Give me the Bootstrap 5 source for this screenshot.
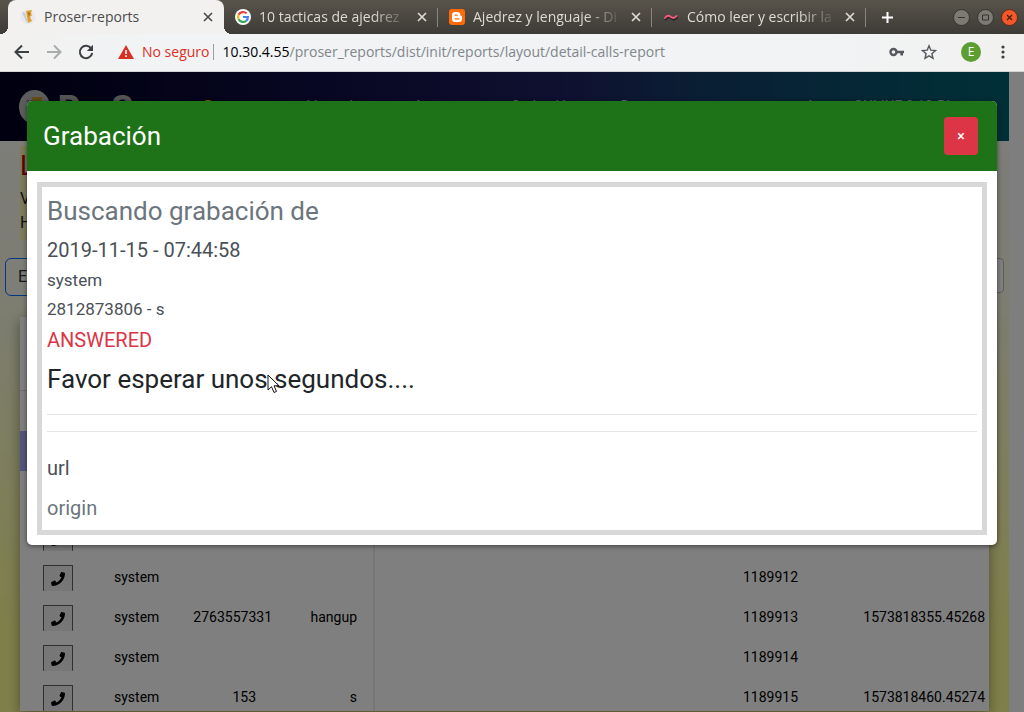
<!DOCTYPE html>
<html lang="es">
<head>
<meta charset="utf-8">
<meta name="viewport" content="width=device-width, initial-scale=1">
<title>Proser-reports</title>
<link href="https://cdn.jsdelivr.net/npm/bootstrap@5.3.0/dist/css/bootstrap.min.css" rel="stylesheet">
<style>
  body { font-family: Roboto, "Liberation Sans", sans-serif; color: #212529; }
  svg { display: block; flex: none; }

  /* browser window */
  .chrome-ui { font-family: "Open Sans", "Noto Sans", sans-serif; font-size: 14px; line-height: 20px; }
  .tab-strip { height: 34px; background: linear-gradient(#59544b, #3d3b37); color: #dfdbd2; padding-left: 8px; }
  .browser-tab { flex: 0 1 214px; min-width: 0; padding: 0 10px 0 11px; gap: 8px; position: relative; }
  .browser-tab + .browser-tab:not(.after-active)::before,
  .new-tab::before { content: ""; position: absolute; left: -1px; top: 8px; width: 1px; height: 19px; background: #8a867d; }
  .browser-tab.current { flex-basis: 216px; padding-left: 12px; background: #f2f1f0; color: #4c4c4c; border-radius: 8px 8px 0 0; }
  .browser-tab.current::before, .browser-tab.current::after { content: ""; position: absolute; bottom: 0; width: 8px; height: 8px; }
  .browser-tab.current::before { left: -8px; background: radial-gradient(circle at 0 0, transparent 8px, #f2f1f0 8px); }
  .browser-tab.current::after { right: -8px; background: radial-gradient(circle at 100% 0, transparent 8px, #f2f1f0 8px); }
  .tab-title { flex: 1 1 0; min-width: 0; overflow: hidden; white-space: nowrap; }
  .fading { -webkit-mask-image: linear-gradient(to left, transparent, #000 36px); mask-image: linear-gradient(to left, transparent, #000 36px); }
  .plain { background: none; border: 0; padding: 0; color: inherit; }
  .new-tab { position: relative; padding: 0 15px; }
  .win-controls { gap: 7px; padding-right: 6px; }
  .toolbar { height: 38px; background: linear-gradient(90deg, #f2f1f0, #f1f3f4 15%, #f1f3f4 80%, #f2f1f0); border-bottom: 1px solid #d4d4d2; color: #4a4a4a; padding: 0 17px 1px 13px; }
  .address { color: #80868b; white-space: nowrap; }
  .unsafe { color: #d93025; }
  .addr-divider { width: 1px; height: 16px; background: #9aa0a6; }
  .profile { width: 20px; height: 20px; border-radius: 50%; background: #5c9e31; color: #fff; font-size: 12px; line-height: 20px; }

  /* page behind the dialog */
  .web-view { position: relative; min-height: 0; background: #fff; }
  .scroll-gutter { width: 15px; background: #fcfcfc; }
  .report-page { min-width: 0; background: linear-gradient(#fbfbf2 12%, #fafae4 35%, #ffff94 88%); }
  .site-nav { height: 69px; padding: 0 57px 0 19px; background: linear-gradient(90deg, #000020, #100f46 32%, #1f2060 55%, #143e68 70%, #00606f); color: #c8c8c8; font-size: 14px; }
  .site-nav a { color: inherit; text-decoration: none; }
  .site-nav .brand-text { font-size: 34px; font-weight: 900; color: #aaa; line-height: 34px; }
  .nav-links { gap: 46px; padding-left: 40px; }
  .report-head { margin: 5px 5px 0 20px; line-height: 24px; }
  .report-head > div { display: inline-block; background: #f8f8b8; padding: 5px 0; vertical-align: top; }
  .report-head h1 { font-size: 27px; line-height: 30px; font-weight: 400; color: #c00000; margin: 0 0 6px; }
  .report-tools { padding: 18px 5px 0; }
  .report-tools .btn { height: 38px; background: #fcfcf2; color: #333; padding: 0 12px; }
  .report-tools input { width: 240px; height: 35px; border: 1px solid #bbb; border-radius: 4px; background: #fff; }
  .report-card { margin: 21px 20px 0; background: #fff; box-shadow: 0 3px 12px rgba(0, 0, 0, .4); }
  .filter-bar { height: 74px; border-bottom: 1px solid #ddd; }
  .calls { width: 100%; table-layout: fixed; font-size: 14px; line-height: 28px; color: #000; }
  .calls th, .calls td { height: 40px; padding: 0; vertical-align: top; font-weight: 400; white-space: nowrap; }
  .calls td { padding-top: 12px; }
  .calls .totals { background: #a9abff; }
  .calls .edge { border-right: 2px solid #ececec; padding-right: 16px; }
  .calls .short { padding-right: 16px; }
  .calls td.action { padding: 14px 0 0 23px; }
  .play-btn { width: 30px; height: 26px; padding: 0 0 0 7px; border: 1px solid #606060; border-bottom: 0; border-radius: 1px; background: #efefef; display: block; color: #000; }

  /* dialog */
  .shade { position: absolute; inset: 0; background: rgba(0, 0, 0, .5); padding: 29px 27px; }
  .shade .modal-content { border: 0; border-radius: 5px; background: #fff; color: #212529; box-shadow: 0 1px 5px rgba(0, 0, 0, .5); }
  .shade .modal-header { height: 70px; padding: 0 19px 0 16px; border: 0; border-radius: 5px 5px 0 0; background: #1e7217; color: #fff; }
  .shade .modal-body { margin: 11px 10px 10px; border: 5px solid #d8d8d8; padding: 9px 5px 10px; }
  .title-lg { font-size: 26px; line-height: 30px; font-weight: 400; margin: 0; }
  .text-md { font-size: 20px; line-height: 24px; margin: 0; }
  .text-sm { font-size: 17px; line-height: 21px; margin: 0; }
  .gap-under { margin-bottom: 12px; }
  .gap-rule { margin-bottom: 20px; }
  .ink { color: #495057; }
  .soft { color: #6c757d; }
  .btn-close-red { width: 34px; height: 38px; padding: 0; border-radius: 4px; background: #dc3545; color: #fff; font-size: 14px; font-weight: 500; border: 0; }
  .shade hr { margin: 0; color: #000; opacity: .1; }
  .pointer { position: absolute; left: 267px; top: 302px; }
</style>
</head>
<body class="d-flex flex-column vh-100 overflow-hidden">

<header class="chrome-ui flex-shrink-0">
  <div class="tab-strip d-flex align-items-stretch">
    <div class="browser-tab current d-flex align-items-center">
      <svg width="16" height="16" viewBox="0 0 16 16"><circle cx="8" cy="8" r="7.500" fill="#e8e9ee"/><path d="M2 3l4 9 2 2-3-10z" fill="#c6c9d4"/><path d="M6 2l6-1-1 3 1 2-2 2 2 4-4 2-1-6z" fill="#e2a02c"/><path d="M8 3l2 1-1 4z" fill="#8d651c"/></svg>
      <span class="tab-title">Proser-reports</span>
      <button class="plain" aria-label="Cerrar pestaña"><svg width="12" height="12" viewBox="0 0 12 12" stroke="currentColor" stroke-width="1.700"><path d="M2 2l8 8M10 2l-8 8"/></svg></button>
    </div>
    <div class="browser-tab after-active d-flex align-items-center">
      <svg width="16" height="16" viewBox="0 0 16 16"><circle cx="8" cy="8" r="8" fill="#fff"/><g fill="none" stroke-width="2.200"><path d="M11.500 4.400A5 5 0 0 0 3.600 5.700" stroke="#ea4335"/><path d="M3.600 5.700a5 5 0 0 0 0 4.600" stroke="#fbbc05"/><path d="M3.600 10.300a5 5 0 0 0 7.600 1.500" stroke="#34a853"/><path d="M11.200 11.800A5 5 0 0 0 12.900 8H8" stroke="#4285f4"/></g></svg>
      <span class="tab-title fading">10 tacticas de ajedrez</span>
      <button class="plain" aria-label="Cerrar pestaña"><svg width="12" height="12" viewBox="0 0 12 12" stroke="currentColor" stroke-width="1.700"><path d="M2 2l8 8M10 2l-8 8"/></svg></button>
    </div>
    <div class="browser-tab d-flex align-items-center">
      <svg width="16" height="16" viewBox="0 0 16 16"><rect width="16" height="16" rx="3" fill="#ff6a0a"/><path d="M6 3h2.500A2.800 2.800 0 0 1 11.300 5.800c0 .8.300 1 1 1 .5 0 .7.300.7.700V10a3 3 0 0 1-3 3H6a3 3 0 0 1-3-3V6a3 3 0 0 1 3-3z" fill="#fff"/><path d="M6.200 6.100h2M6.200 9.900h3.600" stroke="#ff6a0a" stroke-width="1.400" stroke-linecap="round"/></svg>
      <span class="tab-title fading">Ajedrez y lenguaje - Di</span>
      <button class="plain" aria-label="Cerrar pestaña"><svg width="12" height="12" viewBox="0 0 12 12" stroke="currentColor" stroke-width="1.700"><path d="M2 2l8 8M10 2l-8 8"/></svg></button>
    </div>
    <div class="browser-tab d-flex align-items-center">
      <svg width="16" height="16" viewBox="0 0 16 16" fill="none" stroke-linecap="round"><path d="M2.500 10.500c2-3 4-2.500 6-1s4 1 5.500-1" stroke="#222" stroke-width="2"/><path d="M2 9c2-3 4-2.500 6-1s4 1 5.500-1" stroke="#f05a78" stroke-width="2"/></svg>
      <span class="tab-title fading">Cómo leer y escribir la</span>
      <button class="plain" aria-label="Cerrar pestaña"><svg width="12" height="12" viewBox="0 0 12 12" stroke="currentColor" stroke-width="1.700"><path d="M2 2l8 8M10 2l-8 8"/></svg></button>
    </div>
    <button class="plain new-tab" aria-label="Nueva pestaña"><svg width="13" height="13" viewBox="0 0 13 13" stroke="#fff" stroke-width="2"><path d="M6.500 1v11M1 6.500h11"/></svg></button>
    <div class="win-controls d-flex align-items-center ms-auto">
      <button class="plain" aria-label="Minimizar"><svg width="17" height="17" viewBox="0 0 17 17"><circle cx="8.500" cy="8.500" r="8" fill="#7d7a73" stroke="#35332f"/><path d="M5 8.500h7" stroke="#35332f"/></svg></button>
      <button class="plain" aria-label="Maximizar"><svg width="17" height="17" viewBox="0 0 17 17"><circle cx="8.500" cy="8.500" r="8" fill="#7d7a73" stroke="#35332f"/><path d="M5.500 6h6v5h-6z" fill="none" stroke="#35332f"/></svg></button>
      <button class="plain" aria-label="Cerrar"><svg width="17" height="17" viewBox="0 0 17 17"><circle cx="8.500" cy="8.500" r="8" fill="#f2592a" stroke="#5a2a18"/><path d="M6 6l5 5M11 6l-5 5" stroke="#4a1c0c" stroke-width="1.300"/></svg></button>
    </div>
  </div>

  <div class="toolbar d-flex align-items-center">
    <div class="d-flex gap-3 me-4">
      <button class="plain" aria-label="Atrás"><svg width="17" height="16" viewBox="0 0 17 16" fill="none" stroke="#3c4043" stroke-width="2"><path d="M16 8H3M9 1.500L2.500 8 9 14.500"/></svg></button>
      <button class="plain" aria-label="Adelante"><svg width="16" height="16" viewBox="0 0 16 16" fill="none" stroke="#a9abad" stroke-width="2"><path d="M1 8h13M8 1.500L14.500 8 8 14.500"/></svg></button>
      <button class="plain" aria-label="Recargar"><svg width="16" height="16" viewBox="0 0 16 16"><path d="M13.300 4.600A6.200 6.200 0 1 0 14.200 9" fill="none" stroke="#3c4043" stroke-width="2"/><path d="M15 .8v6.200H8.800z" fill="#3c4043"/></svg></button>
    </div>
    <svg class="me-2" width="16" height="14" viewBox="0 0 16 14"><path d="M8 0l8 14H0z" fill="#d93025"/><path d="M8 5v4M8 10.300v1.600" stroke="#fff" stroke-width="1.600"/></svg>
    <span class="unsafe">No seguro</span>
    <span class="addr-divider ms-1 me-2"></span>
    <div class="address flex-grow-1"><span class="text-black">10.30.4.55</span>/proser_reports/dist/init/reports/layout/detail-calls-report</div>
    <div class="d-flex align-items-center">
      <button class="plain me-3" aria-label="Contraseñas"><svg width="16" height="10" viewBox="0 0 16 10"><circle cx="4.500" cy="5" r="3" fill="none" stroke="#54585c" stroke-width="2.400"/><path d="M7.500 5H15M12.700 5v3.500" fill="none" stroke="#54585c" stroke-width="2.600"/></svg></button>
      <button class="plain me-4" aria-label="Marcador"><svg width="16" height="16" viewBox="0 0 16 16"><path d="M8 1.800l1.800 4.400 4.700.4-3.600 3.100 1.100 4.600L8 11.800l-4 2.500 1.100-4.600L1.500 6.600l4.700-.4z" fill="none" stroke="#54585c" stroke-width="1.400"/></svg></button>
      <button class="plain profile me-3" aria-label="Perfil">E</button>
      <button class="plain" aria-label="Menú"><svg width="10" height="14" viewBox="0 0 10 14" fill="#3c4043"><circle cx="6" cy="2" r="1.600"/><circle cx="6" cy="7" r="1.600"/><circle cx="6" cy="12" r="1.600"/></svg></button>
    </div>
  </div>
</header>

<div class="web-view d-flex flex-grow-1 overflow-hidden">
  <div class="report-page flex-grow-1">
    <nav class="site-nav d-flex align-items-center">
      <svg class="me-2" width="31" height="34" viewBox="0 0 31 34"><ellipse cx="15.500" cy="17" rx="15.500" ry="17" fill="#bbb"/><path d="M7 10l6 14 3 5-2-19z" fill="#8a8a94"/><path d="M13 7h11l-3 6 2 5-7 3z" fill="#c99a2a"/></svg>
      <a class="brand-text" href="#">ProSer</a>
      <div class="nav-links d-flex">
        <a class="text-warning" href="#">Reportes</a><a href="#">Llamadas</a><a href="#">Agentes</a><a href="#">Grabación</a><a href="#">Datos</a>
      </div>
      <span class="ms-auto">Agente ONLINE 0:10:51</span>
    </nav>
    <div class="report-head">
      <div><h1>L</h1>V<br>H</div>
    </div>
    <div class="report-tools d-flex justify-content-between">
      <button class="btn btn-outline-primary" aria-label="Exportar">E</button>
      <input type="text" aria-label="Filtro">
    </div>
    <section class="report-card">
      <div class="filter-bar"></div>
      <table class="calls">
        <colgroup><col style="width:94px"><col style="width:70px"><col style="width:88px"><col style="width:102px"><col><col style="width:56px"><col style="width:190px"></colgroup>
        <thead><tr><th></th><th></th><th></th><th class="edge"></th><th></th><th></th><th></th></tr></thead>
        <tbody id="rows">
          <tr class="totals"><td></td><td></td><td></td><td></td><td></td><td></td><td></td></tr>
        </tbody>
      </table>
    </section>
  </div>
  <div class="scroll-gutter flex-shrink-0"></div>

  <div class="shade">
    <div class="modal-content" role="dialog" aria-labelledby="dlg-title">
      <div class="modal-header d-flex align-items-center justify-content-between">
        <h4 class="title-lg" id="dlg-title">Grabación</h4>
        <button class="btn-close-red" aria-label="Cerrar">×</button>
      </div>
      <div class="modal-body">
        <h4 class="title-lg soft gap-under">Buscando grabación de</h4>
        <p class="text-md ink mb-2">2019-11-15 - 07:44:58</p>
        <p class="text-sm ink mb-2">system</p>
        <p class="text-sm ink mb-2">2812873806 - s</p>
        <p class="text-md text-danger gap-under">ANSWERED</p>
        <h4 class="title-lg gap-rule">Favor esperar unos segundos....</h4>
        <hr class="mb-3">
        <hr>
        <p class="text-md ink pt-4 mb-3">url</p>
        <p class="text-md soft">origin</p>
      </div>
    </div>
    <svg class="pointer" width="13" height="20" viewBox="0 0 13 20"><path d="M1 1v15l3.500-3.300L7 18.500l2.500-1.100L7 11.800h5z" fill="#fff" stroke="#111"/></svg>
  </div>
</div>

<script>
  const calls = [
    ["", "", "", ""],
    ["", "", "", ""],
    ["", "", "1189912", ""],
    ["2763557331", "hangup", "1189913", "1573818355.45268"],
    ["", "", "1189914", ""],
    ["153", "s", "1189915", "1573818460.45274"]
  ];
  const phone = '<svg width="14" height="14" viewBox="0 0 512 512" fill="currentColor"><path d="M493.400 24.600l-104-24c-11.300-2.600-22.900 3.300-27.500 13.900l-48 112c-4.200 9.800-1.400 21.300 6.900 28l60.600 49.600c-36 76.700-98.900 140.500-177.200 177.200l-49.600-60.600c-6.800-8.300-18.200-11.100-28-6.900l-112 48C3.900 366.500-2 378.100.6 389.400l24 104C27.100 504.200 36.700 512 48 512c256.100 0 464-207.500 464-464 0-11.200-7.700-20.900-18.600-23.400z"/></svg>';
  document.getElementById("rows").insertAdjacentHTML("beforeend", calls.map(([num, dest, id, uid], i) =>
    `<tr><td class="action"><button class="play-btn" aria-label="Escuchar">${phone}</button></td><td>${i ? "system" : ""}</td>
     <td class="text-end ${num.length < 4 ? "short" : ""}">${num}</td><td class="text-end edge">${dest}</td><td></td><td>${id}</td><td class="text-end pe-1">${uid}</td></tr>`).join(""));
</script>
<script src="https://cdn.jsdelivr.net/npm/bootstrap@5.3.0/dist/js/bootstrap.bundle.min.js"></script>
</body>
</html>
